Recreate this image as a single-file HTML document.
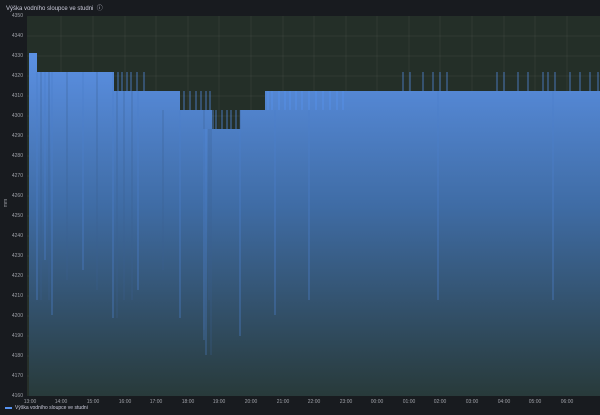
<!DOCTYPE html>
<html><head><style>
body{margin:0;width:600px;height:415px;background:#181b1f;font-family:"Liberation Sans",sans-serif;overflow:hidden;position:relative}
.t{position:absolute;left:6px;top:3px;font-size:6px;color:#ccccdc}
.yl{position:absolute;left:0;width:23px;text-align:right;font-size:5px;color:#9fa1a8}
.xl{position:absolute;top:399px;font-size:5px;color:#9fa1a8;transform:translateX(-50%)}
.lg{position:absolute;left:5px;top:405px;font-size:5px;color:#ccccdc}
.lg span{display:inline-block;width:7px;height:2px;background:#5794f2;vertical-align:middle;margin-right:3px}
</style></head><body>
<div class="t">Výška vodního sloupce ve studni &nbsp;ⓘ</div>
<svg width="600" height="415" style="position:absolute;left:0;top:0">
<defs>
<linearGradient id="bg" x1="0" y1="0" x2="0" y2="1"><stop offset="0" stop-color="#242f28"/><stop offset="1" stop-color="#262f29"/></linearGradient>
<linearGradient id="f" x1="0" y1="16" x2="0" y2="396" gradientUnits="userSpaceOnUse"><stop offset="0.1" stop-color="#5b90e3"/><stop offset="0.5" stop-color="#3f6ca5"/><stop offset="1" stop-color="#283a3a"/></linearGradient>
</defs>
<rect x="27" y="16" width="573" height="380" fill="url(#bg)"/>
<g stroke="#ffffff" stroke-opacity="0.05" stroke-width="1">
<path d="M27 36H600M27 56H600M27 76H600M27 96H600M27 116H600M27 136H600M27 156H600M27 176H600M27 196H600M27 216H600M27 236H600M27 256H600M27 276H600M27 296H600M27 316H600M27 336H600M27 356H600M27 376H600"/>
<path d="M61 16V396M93 16V396M125 16V396M156 16V396M188 16V396M219 16V396M251 16V396M283 16V396M314 16V396M346 16V396M377 16V396M409 16V396M440 16V396M472 16V396M504 16V396M535 16V396M567 16V396"/>
</g>
<path d="M29 396V53H37V72H114V91H180V110H212V129H240V110H265V91H600V396Z" fill="url(#f)"/>
<g stroke="#5794f2" stroke-width="1" opacity="0.7">
<path d="M118 72V91M122 72V91M127 72V91M131 72V91M137 72V91M144 72V91M184 91V110M190 91V110M196 91V110M201 91V110M206 91V110M210 91V110M268 91V110M272 91V110M279 91V110M285 91V110M290 91V110M296 91V110M302 91V110M309 91V110M316 91V110M323 91V110M330 91V110M337 91V110M343 91V110M213 110V129M216 110V129M222 110V129M227 110V129M231 110V129M236 110V129"/>
<path d="M403 72V91M410 72V91M423 72V91M433 72V91M440 72V91M447 72V91M497 72V91M504 72V91M518 72V91M528 72V91M543 72V91M548 72V91M555 72V91M570 72V91M580 72V91M590 72V91M598 72V91"/>
</g>
<g stroke="#3a5f90" stroke-width="0.7" opacity="0.7">
<path d="M37 72V300M41 72V300M45 72V260M49 72V300M52 72V315M67 72V280M83 72V270M97 72V290M113 72V318M117 91V318M124 91V300M132 91V300M138 91V290M163 110V270M180 110V318M204 110V330M209 129V300M211 129V355M240 110V336M275 110V315M309 110V300M438 91V300M553 91V300"/>
</g>
<g stroke="#5794f2" stroke-width="0.7" opacity="0.6">
<path d="M37 72V300M45 72V260M52 72V315M83 72V270M113 72V318M138 91V290M180 110V318M204 129V340M206 129V355M240 129V336M275 110V315M309 110V300M438 91V300M553 91V300"/>
</g>
</svg>
<div class="yl" style="top:13px">4350</div><div class="yl" style="top:33px">4340</div><div class="yl" style="top:53px">4330</div><div class="yl" style="top:73px">4320</div><div class="yl" style="top:93px">4310</div><div class="yl" style="top:113px">4300</div><div class="yl" style="top:133px">4290</div><div class="yl" style="top:153px">4280</div><div class="yl" style="top:173px">4270</div><div class="yl" style="top:193px">4260</div><div class="yl" style="top:213px">4250</div><div class="yl" style="top:233px">4240</div><div class="yl" style="top:253px">4230</div><div class="yl" style="top:273px">4220</div><div class="yl" style="top:293px">4210</div><div class="yl" style="top:313px">4200</div><div class="yl" style="top:333px">4190</div><div class="yl" style="top:353px">4180</div><div class="yl" style="top:373px">4170</div><div class="yl" style="top:393px">4160</div>
<div style="position:absolute;left:2px;top:200px;font-size:5px;color:#9fa1a8;transform:rotate(-90deg)">mm</div>
<div class="xl" style="left:30px">13:00</div><div class="xl" style="left:61px">14:00</div><div class="xl" style="left:93px">15:00</div><div class="xl" style="left:125px">16:00</div><div class="xl" style="left:156px">17:00</div><div class="xl" style="left:188px">18:00</div><div class="xl" style="left:219px">19:00</div><div class="xl" style="left:251px">20:00</div><div class="xl" style="left:283px">21:00</div><div class="xl" style="left:314px">22:00</div><div class="xl" style="left:346px">23:00</div><div class="xl" style="left:377px">00:00</div><div class="xl" style="left:409px">01:00</div><div class="xl" style="left:440px">02:00</div><div class="xl" style="left:472px">03:00</div><div class="xl" style="left:504px">04:00</div><div class="xl" style="left:535px">05:00</div><div class="xl" style="left:567px">06:00</div>
<div class="lg"><span></span>Výška vodního sloupce ve studni</div>
</body></html>
